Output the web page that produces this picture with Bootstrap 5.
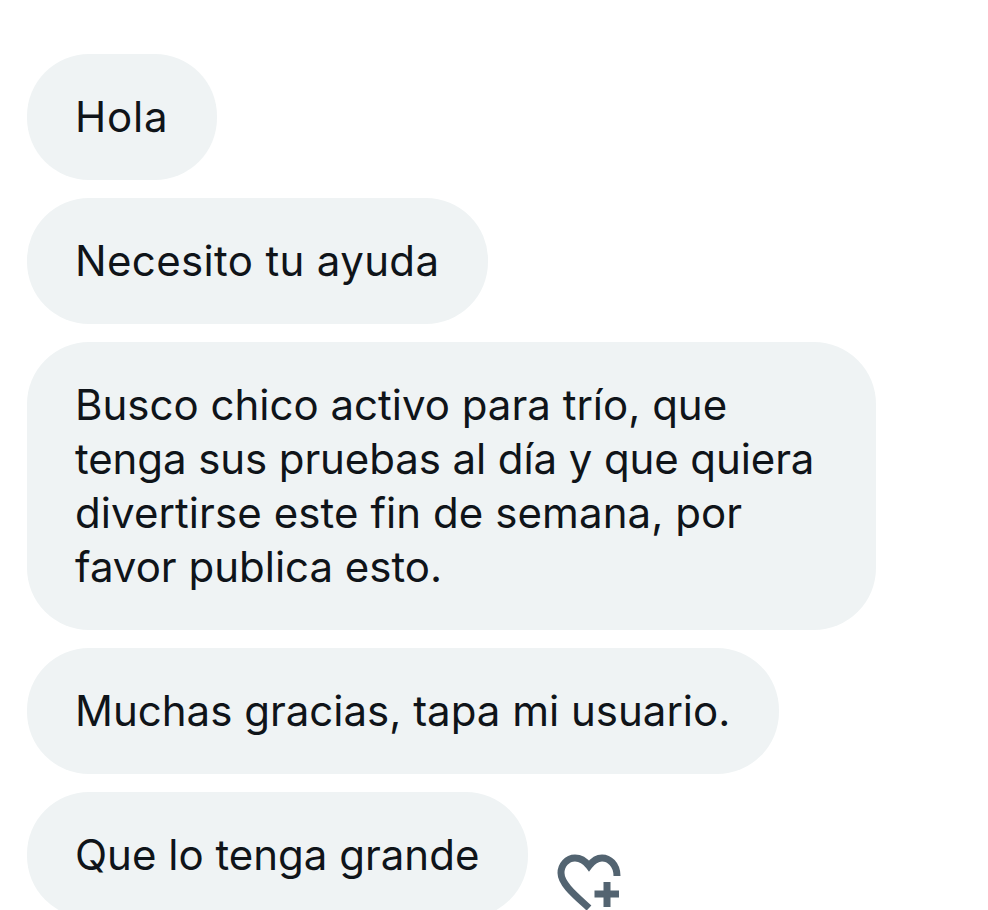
<!DOCTYPE html>
<html lang="es">
<head>
    <meta charset="UTF-8" />
    <title>Mensajes</title>
    <link href="https://cdn.jsdelivr.net/npm/bootstrap@5.3.0/dist/css/bootstrap.min.css" rel="stylesheet">
    <style>
        html, body {
            height: 910px;
            overflow: hidden;
            background-color: #fff;
        }

        .chat-list {
            padding: 54px 0 0 27px;
            gap: 18px;
        }

        .bubble {
            background-color: #eff3f4;
            color: #0f1419;
            font-family: "Inter", "Liberation Sans", sans-serif;
            font-size: 42px;
            line-height: 54px;
            padding: 36px 49px 36px 48px;
            border-radius: 62px;
            flex-shrink: 0;
        }

        .bubble-wide {
            width: 849px;
        }

        .track-hola { letter-spacing: 0.8px; }
        .track-ayuda { letter-spacing: 0.35px; }
        .track-pruebas { letter-spacing: -0.1px; }
        .track-fin { letter-spacing: 0.08px; }

        .react-icon {
            width: 66px;
            height: 60px;
            margin: 60px 0 0 28px;
            flex-shrink: 0;
        }
    </style>
</head>
<body>

<div class="chat-list d-flex flex-column align-items-start">
    <div class="bubble track-hola">Hola</div>
    <div class="bubble track-ayuda">Necesito tu ayuda</div>
    <div class="bubble bubble-wide">Busco chico activo para trío, que<br><span class="track-pruebas">tenga sus pruebas al día y que quiera</span><br><span class="track-fin">divertirse este fin de semana, por</span><br>favor publica esto.</div>
    <div class="bubble">Muchas gracias, tapa mi usuario.</div>
    <div class="d-flex align-items-start">
        <div class="bubble">Que lo tenga grande</div>
        <svg class="react-icon" viewBox="555 852 66 60" fill="none" stroke="#536471" stroke-width="7">
            <path d="M616 876C616 864 608 858 601 858C595 858 591 862 588 866C585 862 581 858 574 858C566 858 560 865 560 873C560 884 575 896 588 908"/>
            <path d="M593.5 894H618M606 882V907"/>
        </svg>
    </div>
</div>

<script src="https://cdn.jsdelivr.net/npm/bootstrap@5.3.0/dist/js/bootstrap.bundle.min.js"></script>
</body>
</html>
